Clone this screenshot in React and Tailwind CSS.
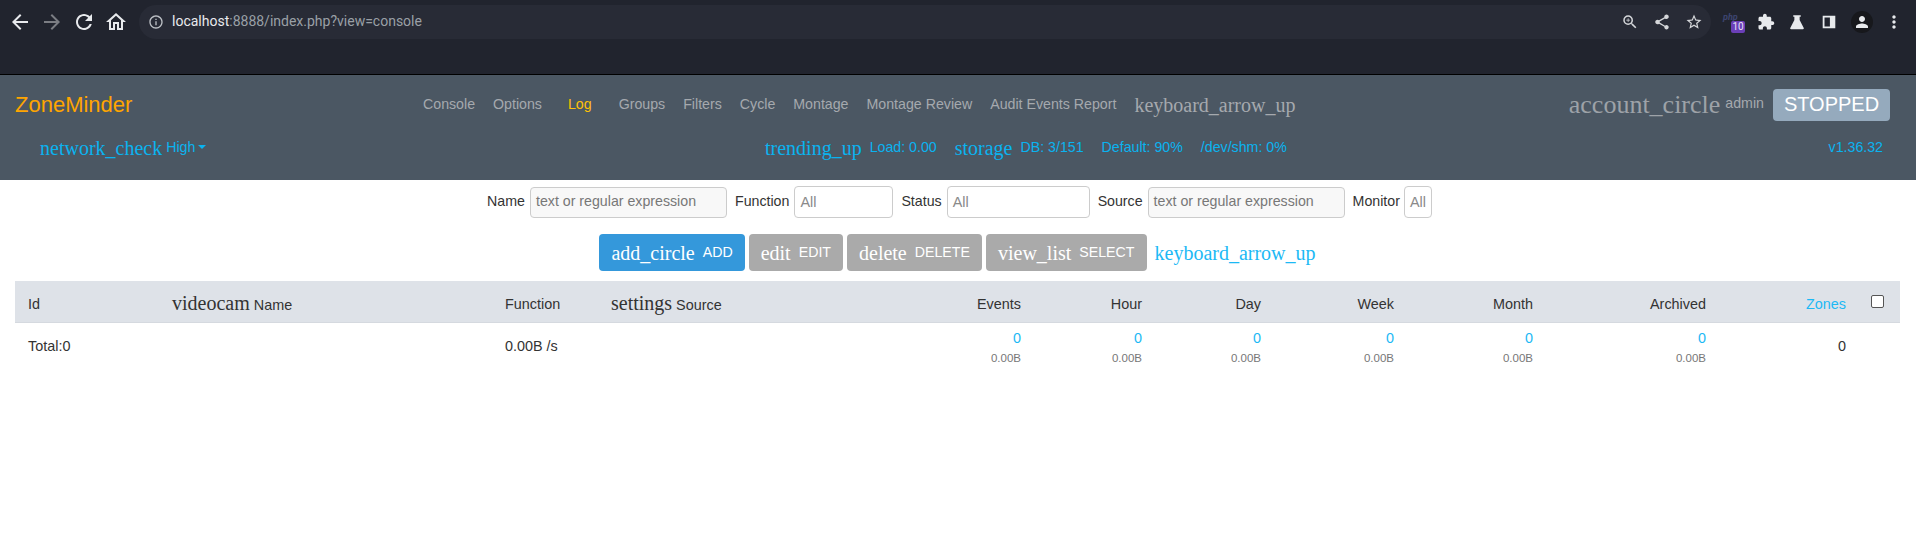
import React from "react";

const navLinks = ["Console", "Options", "Log", "Groups", "Filters", "Cycle", "Montage", "Montage Review", "Audit Events Report"];
const numCols = [
  { label: "Events", width: "w-[109px]" },
  { label: "Hour", width: "w-[121px]" },
  { label: "Day", width: "w-[119px]" },
  { label: "Week", width: "w-[133px]" },
  { label: "Month", width: "w-[139px]" },
  { label: "Archived", width: "w-[173px]" },
];

// material icon font is missing in the capture, so ligature names show as serif text
function Mi({ children, className = "text-[20px]" }) {
  return <span className={`font-['Liberation_Serif',serif] leading-none ${className}`}>{children}</span>;
}

function Icon({ d, className = "", size = 24 }) {
  return (
    <svg width={size} height={size} viewBox="0 0 24 24" fill="currentColor" className={className}>
      <path d={d} />
    </svg>
  );
}

function Toolbar() {
  return (
    <div className="h-[75px] bg-[#21242e] border-b border-black font-['Roboto',sans-serif]">
      <div className="h-[42px] flex items-center pl-[8px] pr-[10px] pt-[1px]">
        <Icon className="text-[#e8eaed]" size={24} d="M20 11H7.83l5.59-5.59L12 4l-8 8 8 8 1.41-1.41L7.83 13H20v-2z" />
        <Icon className="text-[#7b7d83] ml-[8px]" size={24} d="M12 4l-1.41 1.41L16.17 11H4v2h12.17l-5.58 5.59L12 20l8-8z" />
        <Icon className="text-[#e8eaed] ml-[8px]" size={24} d="M17.65 6.35C16.2 4.9 14.21 4 12 4c-4.42 0-7.99 3.58-7.99 8s3.57 8 7.99 8c3.73 0 6.84-2.55 7.73-6h-2.08c-.82 2.33-3.04 4-5.65 4-3.31 0-6-2.69-6-6s2.69-6 6-6c1.66 0 3.14.69 4.22 1.78L13 11h7V4l-2.35 2.35z" />
        <Icon className="text-[#e8eaed] ml-[8px]" size={24} d="M12 5.69l5 4.5V18h-2v-6H9v6H7v-7.81l5-4.5M12 3L2 12h3v8h6v-6h2v6h6v-8h3L12 3z" />
        <div className="ml-[11px] w-[1572px] h-[34px] rounded-full bg-[#282b36] flex items-center pl-[9px] pr-[8px]">
          <Icon className="text-[#bdc1c6]" size={16} d="M11 7h2v2h-2zm0 4h2v6h-2zm1-9C6.48 2 2 6.48 2 12s4.48 10 10 10 10-4.48 10-10S17.52 2 12 2zm0 18c-4.41 0-8-3.59-8-8s3.59-8 8-8 8 3.59 8 8-3.59 8-8 8z" />
          <span className="ml-[8px] text-[14px] text-[#e8eaed]">localhost<span className="text-[#9aa0a6]">:8888/index.php?view=console</span></span>
          <div className="ml-auto flex items-center gap-[14px] text-[#d5d7da]">
            <Icon size={18} d="M15.5 14h-.79l-.28-.27A6.47 6.47 0 0 0 16 9.5 6.5 6.5 0 1 0 9.5 16c1.61 0 3.09-.59 4.23-1.57l.27.28v.79l5 4.99L20.49 19l-4.99-5zm-6 0C7.01 14 5 11.99 5 9.5S7.01 5 9.5 5 14 7.01 14 9.5 11.99 14 9.5 14zM12 10h-2v2H9v-2H7V9h2V7h1v2h2v1z" />
            <Icon size={18} d="M18 16.08c-.76 0-1.44.3-1.96.77L8.91 12.7c.05-.23.09-.46.09-.7s-.04-.47-.09-.7l7.05-4.11c.54.5 1.25.81 2.04.81 1.66 0 3-1.34 3-3s-1.34-3-3-3-3 1.34-3 3c0 .24.04.47.09.7L8.04 9.81C7.5 9.31 6.79 9 6 9c-1.66 0-3 1.34-3 3s1.34 3 3 3c.79 0 1.5-.31 2.04-.81l7.12 4.16c-.05.21-.08.43-.08.65 0 1.61 1.31 2.92 2.92 2.92 1.61 0 2.92-1.31 2.92-2.92s-1.31-2.92-2.92-2.92z" />
            <Icon size={18} d="M22 9.24l-7.19-.62L12 2 9.19 8.63 2 9.24l5.46 4.73L5.82 21 12 17.27 18.18 21l-1.63-7.03L22 9.24zM12 15.4l-3.76 2.27 1-4.28-3.32-2.88 4.38-.38L12 6.1l1.71 4.04 4.38.38-3.32 2.88 1 4.28L12 15.4z" />
          </div>
        </div>
        <div className="ml-[12px] relative w-[24px] h-[24px]">
          <span className="absolute left-0 top-[1px] text-[9px] italic font-bold text-[#3d4470]">php</span>
          <span className="absolute left-[8px] top-[11px] w-[14px] h-[12px] rounded-[2px] bg-[#6b3fb8] text-[#e8e0f5] text-[10px] leading-[12px] text-center">10</span>
        </div>
        <Icon className="text-[#e8eaed] ml-[10px]" size={18} d="M20.5 11H19V7c0-1.1-.9-2-2-2h-4V3.5C13 2.12 11.88 1 10.5 1S8 2.12 8 3.5V5H4c-1.1 0-1.99.9-1.99 2v3.8H3.5c1.49 0 2.7 1.21 2.7 2.7s-1.21 2.7-2.7 2.7H2V20c0 1.1.9 2 2 2h3.8v-1.5c0-1.49 1.21-2.7 2.7-2.7 1.49 0 2.7 1.21 2.7 2.7V22H17c1.1 0 2-.9 2-2v-4h1.5c1.38 0 2.5-1.12 2.5-2.5S21.88 11 20.5 11z" />
        <Icon className="text-[#e8eaed] ml-[13px]" size={18} d="M7 3h10v2h-1.5v4.2L21 20c.4 1-.2 1.5-1 1.5H4c-.8 0-1.4-.5-1-1.5l5.5-10.8V5H7V3z" />
        <svg width="18" height="18" viewBox="0 0 20 20" className="ml-[14px] text-[#e8eaed]" fill="currentColor">
          <path d="M3 3h14v14H3V3zm2 2v10h6V5H5z" />
        </svg>
        <div className="ml-[13px] w-[22px] h-[22px] rounded-full bg-[#17181c] flex items-center justify-center text-[#e8eaed]">
          <Icon size={18} d="M12 12c2.21 0 4-1.79 4-4s-1.79-4-4-4-4 1.79-4 4 1.79 4 4 4zm0 2c-2.67 0-8 1.34-8 4v2h16v-2c0-2.66-5.33-4-8-4z" />
        </div>
        <Icon className="text-[#e8eaed] ml-[11px]" size={20} d="M12 8c1.1 0 2-.9 2-2s-.9-2-2-2-2 .9-2 2 .9 2 2 2zm0 2c-1.1 0-2 .9-2 2s.9 2 2 2 2-.9 2-2-.9-2-2-2zm0 6c-1.1 0-2 .9-2 2s.9 2 2 2 2-.9 2-2-.9-2-2-2z" />
      </div>
    </div>
  );
}

function Navbar() {
  return (
    <div className="h-[105px] bg-[#4b5763] text-[14.2px]">
      <div className="h-[57px] flex items-center pt-[3px] pl-[15px] pr-[26px]">
        <span className="w-[408px] text-[#ffa500] text-[22px] leading-none">ZoneMinder</span>
        <div className="flex items-center gap-[18px] text-[#a5a9ae]">
          {navLinks.map((l) => (
            <span key={l} className={l === "Log" ? "text-[#ffc107] ml-[8px] mr-[9px]" : ""}>{l}</span>
          ))}
          <Mi className="text-[#a5a9ae] text-[20px]">keyboard_arrow_up</Mi>
        </div>
        <div className="ml-auto flex items-center">
          <Mi className="text-[#9da2a8] text-[26px]">account_circle</Mi>
          <span className="ml-[5px] text-[#a5a9ae] -mt-[2px]">admin</span>
          <span className="ml-[9px] h-[32px] w-[117px] rounded-[4px] bg-[#95aabd] text-white text-[20px] leading-[30px] text-center">STOPPED</span>
        </div>
      </div>
      <div className="h-[32px] flex items-center pl-[40px] pr-[33px] text-[#0ab3f0]">
        <div className="w-[725px] flex items-center">
          <Mi>network_check</Mi>
          <span className="ml-[4px] -mt-[1px]">High</span>
          <span className="ml-[3px] -mt-[1px] w-0 h-0 border-x-[4px] border-x-transparent border-t-[4px] border-t-[#0ab3f0]" />
        </div>
        <div className="flex items-center">
          <Mi>trending_up</Mi>
          <span className="ml-[8px] -mt-[1px]">Load: 0.00</span>
          <Mi className="ml-[18px] text-[20px]">storage</Mi>
          <span className="ml-[8px] -mt-[1px]">DB: 3/151</span>
          <span className="ml-[18px] -mt-[1px]">Default: 90%</span>
          <span className="ml-[18px] -mt-[1px]">/dev/shm: 0%</span>
        </div>
        <span className="ml-auto -mt-[1px]">v1.36.32</span>
      </div>
    </div>
  );
}

function Filters() {
  const text = "h-[31px] rounded-[4px] border border-[#cccccc] bg-[#f8f8f8] px-[5px] text-[14.2px] leading-[27px] text-[#777777]";
  const select = "h-[32px] rounded-[4px] border border-[#cccccc] bg-white px-[5px] text-[14.4px] leading-[30px] text-[#8a8a8a]";
  return (
    <div className="h-[44px] flex items-center justify-center pl-[3px] text-[14.2px] text-[#333333]">
      <span className="mr-[5px] -mt-[1px]">Name</span>
      <div className={`${text} w-[197px]`}>text or regular expression</div>
      <span className="ml-[8px] mr-[5px] -mt-[1px]">Function</span>
      <div className={`${select} w-[99px]`}>All</div>
      <span className="ml-[8px] mr-[5px] -mt-[1px]">Status</span>
      <div className={`${select} w-[143px]`}>All</div>
      <span className="ml-[8px] mr-[5px] -mt-[1px]">Source</span>
      <div className={`${text} w-[197px]`}>text or regular expression</div>
      <span className="ml-[8px] mr-[4px] -mt-[1px]">Monitor</span>
      <div className={`${select} w-[28px]`}>All</div>
    </div>
  );
}

function ActionButton({ icon, label, active }) {
  return (
    <div className={`h-[37px] flex items-center gap-[8px] rounded-[4px] px-[12px] text-white ${active ? "bg-[#3498db]" : "bg-[#aaaaaa]"}`}>
      <Mi>{icon}</Mi>
      <span className="text-[14.2px] mt-[1px]">{label}</span>
    </div>
  );
}

function Actions() {
  return (
    <div className="mt-[10px] h-[37px] flex items-center justify-center gap-[4px] pr-[1px]">
      <ActionButton icon="add_circle" label="ADD" active />
      <ActionButton icon="edit" label="EDIT" />
      <ActionButton icon="delete" label="DELETE" />
      <ActionButton icon="view_list" label="SELECT" />
      <Mi className="ml-[4px] text-[20px] text-[#1cb9f5]">keyboard_arrow_up</Mi>
    </div>
  );
}

function ConsoleTable() {
  return (
    <div className="mt-[10px] mx-[15px] w-[1885px]">
      <table className="w-full table-fixed border-collapse text-[14.4px] text-[#333333]">
        <thead>
          <tr className="h-[41px] bg-[#dee2e8] border-b border-[#d5d9df]">
            <th className="w-[144px] pl-[13px] pt-[7px] text-left font-normal">Id</th>
            <th className="w-[333px] pl-[13px] pt-[7px] text-left font-normal"><Mi>videocam</Mi> Name</th>
            <th className="w-[106px] pl-[13px] pt-[7px] text-left font-normal">Function</th>
            <th className="pl-[13px] pt-[7px] text-left font-normal"><Mi>settings</Mi> Source</th>
            {numCols.map((c) => (
              <th key={c.label} className={`${c.width} pr-[13px] pt-[7px] text-right font-normal`}>{c.label}</th>
            ))}
            <th className="w-[141px] pr-[14px] pt-[7px] text-right font-normal text-[#1cb9f5]">Zones</th>
            <th className="w-[40px] font-normal">
              <div className="ml-[11px] w-[13px] h-[13px] rounded-[2px] border border-[#555555] bg-white" />
            </th>
          </tr>
        </thead>
        <tbody>
          <tr className="h-[48px]">
            <td className="pl-[13px] pt-[2px]">Total:0</td>
            <td />
            <td className="pl-[13px] pt-[2px]">0.00B /s</td>
            <td />
            {numCols.map((c) => (
              <td key={c.label} className="pr-[13px] pt-[2px] text-right">
                <div className="text-[#1cb9f5] leading-[20px]">0</div>
                <div className="text-[11.5px] text-[#777777] leading-[16px] mt-[2px]">0.00B</div>
              </td>
            ))}
            <td className="pr-[14px] pt-[2px] text-right">0</td>
            <td />
          </tr>
        </tbody>
      </table>
    </div>
  );
}

export default function App() {
  return (
    <div className="min-h-screen bg-white font-['Liberation_Sans',Arial,sans-serif]">
      <Toolbar />
      <Navbar />
      <Filters />
      <Actions />
      <ConsoleTable />
    </div>
  );
}
